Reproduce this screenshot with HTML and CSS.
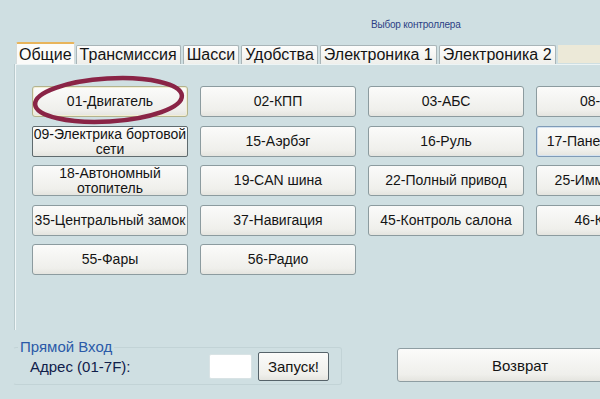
FILE: index.html
```html
<!DOCTYPE html>
<html lang="ru">

<head>
    <meta charset="utf-8">
    <link rel="stylesheet" href="styles.css">
</head>

<body>
    <div class="screen">
        <header class="header">
            <span class="header__caption">Выбор контроллера</span>
        </header>

        <nav class="tabs">
            <span class="tab tab--active">Общие</span>
            <span class="tab">Трансмиссия</span>
            <span class="tab">Шасси</span>
            <span class="tab">Удобства</span>
            <span class="tab">Электроника 1</span>
            <span class="tab">Электроника 2</span>
            <span class="tabs__rest"></span>
        </nav>

        <section class="panel">
            <div class="modules">
                <!-- hand-drawn marker round the first module -->
                <svg class="modules__mark" width="160" height="60" viewBox="0 0 160 60">
                    <ellipse cx="79.5" cy="29" rx="73.5" ry="21.5" transform="rotate(-3.4 79.5 29)"
                        fill="none" stroke="#8a2446" stroke-width="4.5" />
                </svg>
                <button class="btn btn--focus">01-Двигатель</button>
                <button class="btn">02-КПП</button>
                <button class="btn">03-АБС</button>
                <button class="btn">08-Климат</button>

                <button class="btn btn--dark">09-Электрика бортовой<br>сети</button>
                <button class="btn">15-Аэрбэг</button>
                <button class="btn">16-Руль</button>
                <button class="btn btn--hover">17-Панель приборов</button>

                <button class="btn">18-Автономный<br>отопитель</button>
                <button class="btn">19-CAN шина</button>
                <button class="btn">22-Полный привод</button>
                <button class="btn">25-Иммобилайзер</button>

                <button class="btn">35-Центральный замок</button>
                <button class="btn">37-Навигация</button>
                <button class="btn">45-Контроль салона</button>
                <button class="btn">46-Комфорт</button>

                <button class="btn">55-Фары</button>
                <button class="btn">56-Радио</button>
            </div>
        </section>

        <div class="footer">
            <fieldset class="direct">
                <legend class="direct__title">Прямой Вход</legend>
                <div class="direct__row">
                    <label class="direct__label" for="address">Адрес (01-7F):</label>
                    <input class="direct__input" type="text" id="address" autocomplete="off">
                    <button class="btn btn--default">Запуск!</button>
                </div>
            </fieldset>
            <button class="btn btn--back">Возврат</button>
        </div>
    </div>
</body>

</html>
```

FILE: styles.css
```css
*,
*::after,
*::before {
    box-sizing: border-box;
}

html,
body {
    margin: 0;
    background-color: #cfdfe2;
}

body {
    font-family: "Liberation Sans", Arial, sans-serif;
    color: #141414;
}

.screen {
    width: 600px;
    height: 399px;
    overflow: hidden;
}

/* caption line over the tabs */
.header {
    height: 42px;
    padding: 14px 0 0 371px;
}

.header__caption {
    font-size: 10px;
    line-height: 12px;
    letter-spacing: -0.2px;
    color: #2c3f85;
}

/* tab strip */
.tabs {
    display: flex;
    align-items: flex-end;
    height: 22px;
    margin-left: 16px;
    width: 700px;
    font-size: 16px;
}

.tab {
    height: 19px;
    margin-right: 2px;
    padding: 0 3px;
    line-height: 18px;
    white-space: nowrap;
    background: linear-gradient(#fdfdfc, #efefeb);
    border: 1px solid #a9b5b8;
    border-bottom: none;
    border-radius: 2px 2px 0 0;
}

.tab--active {
    height: 22px;
    margin-right: 1px;
    padding: 0 2px;
    line-height: 21px;
    background: #fbfbf9;
    border-color: #d6dcdc;
    border-top: 2px solid #e8b45a;
}

.tabs__rest {
    flex: 1;
    height: 18px;
    margin-bottom: 1px;
    background-color: #ece9d8;
}

/* tab page */
.panel {
    height: 266px;
    padding: 21px 0 0 16px;
    border-top: 1px solid #edf4f5;
    border-left: 1px solid #f0f6f7;
    margin-left: 15px;
    box-shadow: -1px 0 0 #b9cacd;
}

.modules {
    position: relative;
    display: grid;
    grid-template-columns: repeat(4, 156px);
    grid-auto-rows: 31px;
    gap: 8.5px 12px;
}

.modules__mark {
    position: absolute;
    left: -3px;
    top: -15px;
    z-index: 1;
    pointer-events: none;
}

.btn {
    padding: 0;
    font-family: inherit;
    font-size: 14px;
    line-height: 15px;
    color: #141414;
    background: linear-gradient(#fbfbfa, #efefeb 80%, #e4e4df);
    border: 1px solid #8c9b9f;
    border-radius: 3px;
    cursor: pointer;
}

.btn--focus {
    border-color: #b3b38e;
    box-shadow: inset 0 0 0 1px #f3eed2;
}

.btn--dark {
    border-color: #5f6b6e;
    border-radius: 2px;
}

.btn--hover {
    border-color: #7f9bb7;
    box-shadow: inset 0 0 0 1px #d5e3f0;
}

/* bottom area */
.footer {
    display: flex;
    align-items: flex-start;
}

.direct {
    width: 329px;
    margin: 11px 0 0 13px;
    padding: 0 12px 3px 4px;
    border: 1px solid #c2d3d6;
    border-left-color: transparent;
    border-radius: 3px;
}

.direct__title {
    padding: 0 2px;
    font-size: 15px;
    line-height: 12px;
    color: #2b5aa8;
}

.direct__row {
    display: flex;
    align-items: center;
    margin-top: -1px;
    padding-left: 12px;
}

.direct__label {
    flex: 0 0 179px;
    font-size: 15px;
    color: #10204a;
}

.direct__input {
    width: 43px;
    height: 25px;
    margin-right: 6px;
    background: #fff;
    border: 1px solid #d9e3e5;
    border-radius: 2px;
}

.btn--default {
    width: 71px;
    height: 29px;
    font-size: 15px;
    border-color: #56636a;
    border-radius: 2px;
}

.btn--back {
    flex: 0 0 246px;
    height: 34px;
    margin: 18px 0 0 55px;
    font-size: 15px;
    border-color: #8e9da2;
}
```
